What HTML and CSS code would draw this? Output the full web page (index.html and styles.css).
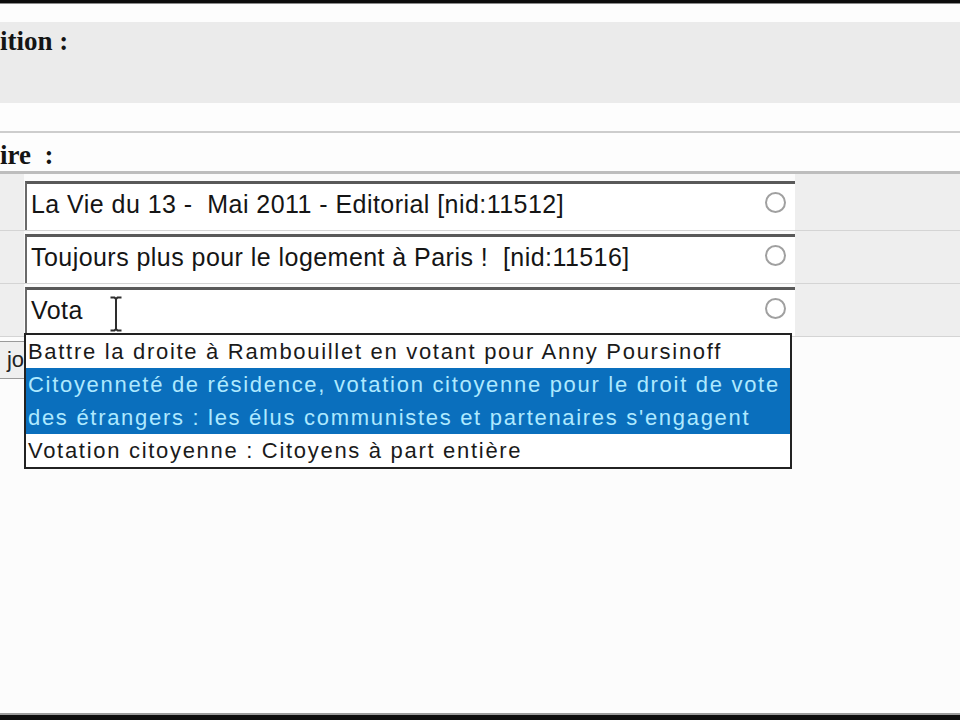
FILE: index.html
```html
<!DOCTYPE html>
<html lang="fr">
<head>
<meta charset="utf-8">
<title>Formulaire</title>
<link rel="stylesheet" href="styles.css">
</head>
<body>
<div class="page">
  <div class="topbar"></div>
  <div class="gap-top"></div>
  <div class="panel"><span class="label">ition :</span></div>
  <div class="gap-mid"></div>
  <div class="label-row"><span class="label">ire&nbsp; :</span></div>
  <div class="rows">
    <div class="row first">
      <div class="side"></div>
      <div class="cell">
        <div class="field"><span class="value">La Vie du 13 -&nbsp; Mai 2011 - Editorial [nid:11512]</span><span class="ring"></span></div>
      </div>
      <div class="side"></div>
    </div>
    <div class="row">
      <div class="side"></div>
      <div class="cell">
        <div class="field"><span class="value">Toujours plus pour le logement à Paris !&nbsp; [nid:11516]</span><span class="ring"></span></div>
      </div>
      <div class="side"></div>
    </div>
    <div class="row">
      <div class="side"></div>
      <div class="cell">
        <div class="field active"><span class="value">Vota</span><span class="ring"></span>
          <svg class="ibeam" width="14" height="36" viewBox="0 0 14 36"><path d="M1.5 1.5h4l1.5 1.5 1.5-1.5h4M7 3v30M1.5 34.5h4L7 33l1.5 1.5h4" fill="none" stroke="#2e2e2e" stroke-width="2"/></svg>
          <ul class="suggest">
            <li>Battre la droite à Rambouillet en votant pour Anny Poursinoff</li>
            <li class="selected">Citoyenneté de résidence, votation citoyenne pour le droit de vote<br>des étrangers : les élus communistes et partenaires s'engagent</li>
            <li>Votation citoyenne : Citoyens à part entière</li>
          </ul>
        </div>
      </div>
      <div class="side"></div>
    </div>
  </div>
  <div class="btn-row"><span class="btn">jo</span></div>
  <div class="fill"></div>
  <div class="bottombar"></div>
</div>
</body>
</html>
```

FILE: styles.css
```css
html, body {
  margin: 0;
  padding: 0;
  background: #fcfcfc;
}

.page {
  min-height: 720px;
  display: flex;
  flex-direction: column;
  font-family: "Liberation Sans", Arial, sans-serif;
  color: #1a1a1a;
  overflow: hidden;
}

.topbar {
  height: 3px;
  background: #0c0c0c;
  border-bottom: 1px solid #8a8a8a;
}

.gap-top {
  height: 18px;
  background: #fdfdfd;
}

.panel {
  height: 81px;
  background: #ebebeb;
  padding-top: 4px;
  box-sizing: border-box;
}

.label {
  font-family: "Liberation Serif", "Times New Roman", serif;
  font-weight: bold;
  font-size: 27px;
  line-height: 30px;
  color: #141414;
}

.gap-mid {
  height: 28px;
  background: #fdfdfd;
  border-bottom: 2px solid #cdcdcd;
}

.label-row {
  height: 41px;
  padding-top: 7px;
  box-sizing: border-box;
  background: #fdfdfd;
  border-bottom: 3px solid #bdbdbd;
}

.rows {
  display: flex;
  flex-direction: column;
}

.row {
  display: grid;
  grid-template-columns: 24px 771px 1fr;
  height: 52px;
  border-bottom: 1px solid #d4d4d4;
}

.row.first {
  height: 56px;
}

.side {
  background: #eeeeee;
}

.cell {
  background: #fbfbfb;
  padding: 3px 0 0 1px;
  box-sizing: border-box;
}

.row.first .cell {
  padding-top: 7px;
}

.field {
  position: relative;
  height: 100%;
  box-sizing: border-box;
  background: #ffffff;
  border-top: 3px solid #595959;
  border-left: 2px solid #6a6a6a;
  display: flex;
  align-items: flex-start;
  justify-content: space-between;
  padding: 5px 9px 0 4px;
}

.value {
  font-size: 25px;
  line-height: 30px;
  letter-spacing: 0.45px;
  color: #151515;
  white-space: nowrap;
}

.ring {
  width: 17px;
  height: 17px;
  margin-top: 3px;
  border: 2.5px solid #a0a0a0;
  border-radius: 50%;
  flex: none;
}

.ibeam {
  position: absolute;
  left: 82px;
  top: 6px;
}

.suggest {
  position: absolute;
  left: -3px;
  top: 43px;
  width: 768px;
  box-sizing: border-box;
  margin: 0;
  padding: 0;
  list-style: none;
  background: #ffffff;
  border: 2px solid #222222;
  z-index: 2;
}

.suggest li {
  font-size: 22px;
  line-height: 33px;
  letter-spacing: 1.7px;
  padding-left: 2px;
  color: #1a1a1a;
  white-space: nowrap;
}

.suggest li.selected {
  background: #0a6fbd;
  color: #aee9ff;
}

.btn-row {
  height: 42px;
  padding-top: 4px;
  box-sizing: border-box;
}

.btn {
  display: block;
  width: 24px;
  height: 38px;
  box-sizing: border-box;
  background: #efefef;
  border-top: 1px solid #9a9a9a;
  border-bottom: 1px solid #9a9a9a;
  font-size: 22px;
  line-height: 36px;
  text-align: right;
  color: #222;
  overflow: hidden;
}

.fill {
  flex: 1;
}

.bottombar {
  height: 5px;
  background: #0c0c0c;
  border-top: 2px solid #9c9c9c;
}
```
